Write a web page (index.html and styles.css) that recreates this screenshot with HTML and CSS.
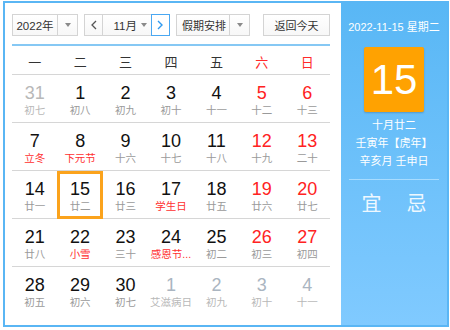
FILE: index.html
```html
<!DOCTYPE html>
<html lang="zh">
<head>
<meta charset="utf-8">
<link rel="stylesheet" href="styles.css">
</head>
<body>
<div class="cal">
  <div class="main">
    <div class="toolbar">
      <div class="sel sel-year"><span class="sel-text">2022年</span><span class="sel-arrow"><i class="tri"></i></span></div>
      <div class="month-group">
        <div class="nav nav-prev"><svg width="8" height="10" viewBox="0 0 8 10"><polyline points="6,1 2,5 6,9" fill="none" stroke="#555" stroke-width="1.3"/></svg></div>
        <div class="sel-month"><span class="sel-text">11月</span><i class="tri"></i></div>
        <div class="nav nav-next"><svg width="8" height="10" viewBox="0 0 8 10"><polyline points="2,1 6,5 2,9" fill="none" stroke="#2f9af0" stroke-width="1.4"/></svg></div>
      </div>
      <div class="sel sel-holiday"><span class="sel-text">假期安排</span><span class="sel-arrow"><i class="tri"></i></span></div>
      <div class="btn-today">返回今天</div>
    </div>
    <div class="week">
      <span>一</span><span>二</span><span>三</span><span>四</span><span>五</span><span class="red">六</span><span class="red">日</span>
    </div>
    <div class="days">
      <div class="d other"><b>31</b><em>初七</em></div>
      <div class="d"><b>1</b><em>初八</em></div>
      <div class="d"><b>2</b><em>初九</em></div>
      <div class="d"><b>3</b><em>初十</em></div>
      <div class="d"><b>4</b><em>十一</em></div>
      <div class="d we"><b>5</b><em>十二</em></div>
      <div class="d we"><b>6</b><em>十三</em></div>

      <div class="d"><b>7</b><em class="fest">立冬</em></div>
      <div class="d"><b>8</b><em class="fest">下元节</em></div>
      <div class="d"><b>9</b><em>十六</em></div>
      <div class="d"><b>10</b><em>十七</em></div>
      <div class="d"><b>11</b><em>十八</em></div>
      <div class="d we"><b>12</b><em>十九</em></div>
      <div class="d we"><b>13</b><em>二十</em></div>

      <div class="d"><b>14</b><em>廿一</em></div>
      <div class="d sel-day"><b>15</b><em>廿二</em></div>
      <div class="d"><b>16</b><em>廿三</em></div>
      <div class="d"><b>17</b><em class="fest">学生日</em></div>
      <div class="d"><b>18</b><em>廿五</em></div>
      <div class="d we"><b>19</b><em>廿六</em></div>
      <div class="d we"><b>20</b><em>廿七</em></div>

      <div class="d"><b>21</b><em>廿八</em></div>
      <div class="d"><b>22</b><em class="fest">小雪</em></div>
      <div class="d"><b>23</b><em>三十</em></div>
      <div class="d"><b>24</b><em class="fest">感恩节...</em></div>
      <div class="d"><b>25</b><em>初二</em></div>
      <div class="d we"><b>26</b><em>初三</em></div>
      <div class="d we"><b>27</b><em>初四</em></div>

      <div class="d last"><b>28</b><em>初五</em></div>
      <div class="d last"><b>29</b><em>初六</em></div>
      <div class="d last"><b>30</b><em>初七</em></div>
      <div class="d last next"><b>1</b><em>艾滋病日</em></div>
      <div class="d last next"><b>2</b><em>初九</em></div>
      <div class="d last next"><b>3</b><em>初十</em></div>
      <div class="d last next"><b>4</b><em>十一</em></div>
    </div>
  </div>
  <div class="side">
    <div class="side-date">2022-11-15 星期二</div>
    <div class="side-day">15</div>
    <div class="side-lunar">
      <div>十月廿二</div>
      <div>壬寅年【虎年】</div>
      <div>辛亥月 壬申日</div>
    </div>
    <div class="side-line"></div>
    <div class="side-yiji"><span>宜</span><span>忌</span></div>
  </div>
</div>
</body>
</html>
```

FILE: styles.css
```css
* { box-sizing: border-box; }
html, body { margin: 0; padding: 0; background: #fff; }
body {
  font-family: "Liberation Sans", Arial, "Noto Sans CJK SC", sans-serif;
  color: #000;
}
.cal {
  margin: 1px 0 0 3px;
  width: 446px;
  height: 326px;
  border: 2px solid #5ab6f4;
  display: flex;
}
.main {
  width: 336px;
  padding: 11px 11px 0 7px;
}
.toolbar {
  display: flex;
  height: 22px;
  font-size: 11.5px;
  color: #333;
}
.sel {
  display: flex;
  height: 22px;
  border: 1px solid #d4d4d4;
  background: linear-gradient(#ffffff, #f7f7f7);
}
.sel-text {
  flex: 1;
  display: flex;
  align-items: center;
  justify-content: center;
  white-space: nowrap;
}
.sel-arrow {
  flex: 0 0 20px;
  width: 20px;
  border-left: 1px solid #d4d4d4;
  display: flex;
  align-items: center;
  justify-content: center;
}
.tri {
  display: block;
  width: 0;
  height: 0;
  border-left: 3px solid transparent;
  border-right: 3px solid transparent;
  border-top: 4px solid #8a8a8a;
}
.sel-year { width: 66px; }
.month-group {
  display: flex;
  margin-left: 6px;
  width: 86px;
  height: 22px;
}
.nav {
  width: 20px;
  height: 22px;
  display: flex;
  align-items: center;
  justify-content: center;
  border: 1px solid #d4d4d4;
  background: linear-gradient(#ffffff, #f7f7f7);
}
.nav-next {
  border-color: #4aa8f2;
  background: #fff;
}
.sel-month {
  width: 48px;
  height: 22px;
  display: flex;
  align-items: center;
  padding: 0 4px 0 10px;
  border-top: 1px solid #d4d4d4;
  border-bottom: 1px solid #d4d4d4;
  background: linear-gradient(#ffffff, #f7f7f7);
}
.sel-month .sel-text { justify-content: flex-start; }
.sel-holiday { width: 74px; margin-left: 6px; }
.sel-holiday .sel-text { font-size: 11px; padding-left: 2px; }
.btn-today {
  margin-left: 13px;
  width: 67px;
  height: 22px;
  border: 1px solid #d4d4d4;
  background: linear-gradient(#ffffff, #f7f7f7);
  display: flex;
  align-items: center;
  justify-content: center;
  font-size: 11px;
}
.week {
  margin-top: 8px;
  border-top: 2px solid #86c8f4;
  height: 31px;
  border-bottom: 1px solid #d6d6d6;
  display: grid;
  grid-template-columns: repeat(7, 1fr);
  align-items: center;
  font-size: 13px;
  color: #333;
  padding-top: 2px;
}
.week span { text-align: center; }
.week .red { color: #ff2b2b; }
.days {
  display: grid;
  grid-template-columns: repeat(7, 1fr);
}
.d {
  height: 48px;
  border-bottom: 1px solid #d6d6d6;
  padding-top: 8px;
  text-align: center;
  overflow: hidden;
}
.d.last { border-bottom: none; }
.d b {
  display: block;
  font-weight: normal;
  font-size: 18px;
  line-height: 20px;
  color: #111;
}
.d em {
  display: block;
  font-style: normal;
  font-size: 10.5px;
  line-height: 14px;
  color: #9a9a9a;
  white-space: nowrap;
}
.d.we b { color: #ff2222; }
.d em.fest { color: #ff3030; }
.d.other b, .d.other em { color: #b8b8b8; }
.d.next b { color: #aab5c1; }
.d.next em { color: #b8b8b8; }
.sel-day {
  outline: 3px solid #fba31c;
  outline-offset: -3px;
}
.side {
  width: 106px;
  background: linear-gradient(#59b7f5, #80caff);
  color: #fff;
  padding-top: 17px;
  display: flex;
  flex-direction: column;
  align-items: center;
}
.side-date {
  font-size: 11px;
  line-height: 14px;
}
.side-day {
  margin-top: 13px;
  width: 60px;
  height: 65px;
  background: #ffa201;
  border-radius: 2px;
  box-shadow: 0 1px 2px rgba(0, 0, 0, 0.2);
  font-size: 42px;
  line-height: 65px;
  text-align: center;
  color: #fff;
}
.side-lunar {
  margin-top: 4px;
  font-size: 11px;
  line-height: 18px;
  text-align: center;
}
.side-line {
  margin-top: 9px;
  width: 90px;
  height: 1px;
  background: #a8dcff;
}
.side-yiji {
  margin-top: 11px;
  display: flex;
  gap: 25px;
  font-size: 20px;
  line-height: 24px;
  color: #eef8ff;
  font-family: "Noto Sans CJK SC", sans-serif;
}
```
